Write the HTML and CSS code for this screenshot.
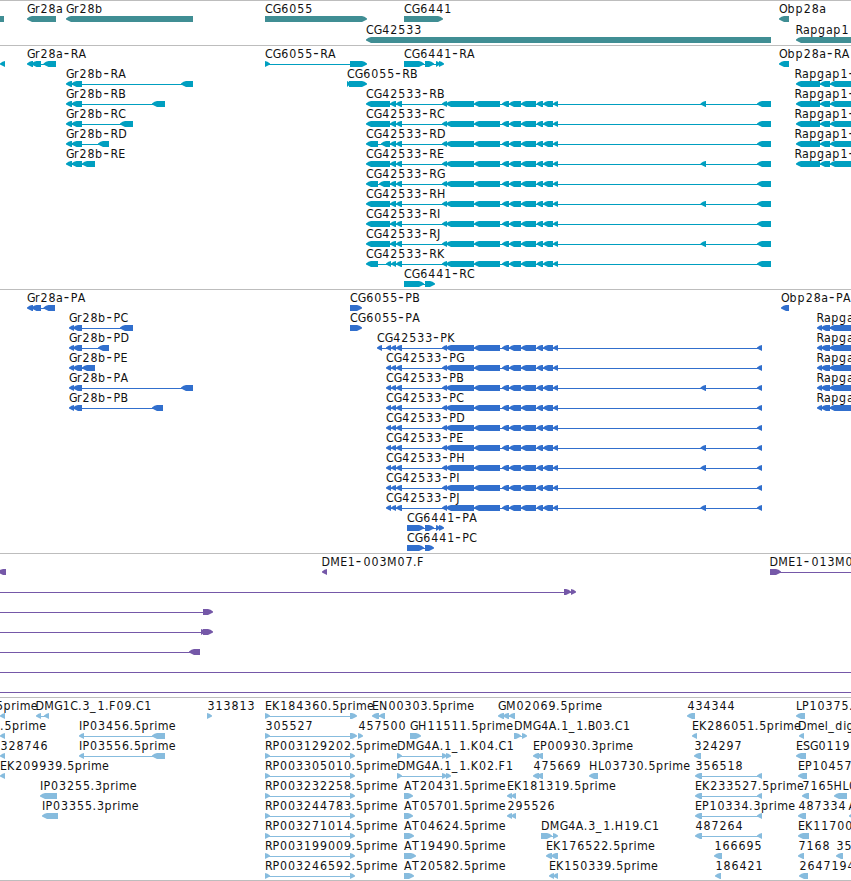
FILE: index.html
```html
<!DOCTYPE html>
<html lang="en">
<head>
<meta charset="utf-8">
<title>Genome tracks</title>
<link rel="stylesheet" href="styles.css">
</head>
<body>
<main class="browser">
  <svg class="track track-gene" id="gene"></svg>
  <svg class="track track-transcript" id="transcript"></svg>
  <svg class="track track-protein" id="protein"></svg>
  <svg class="track track-bac" id="bac"></svg>
  <svg class="track track-est" id="est"></svg>
</main>
<script src="tracks.js"></script>
</body>
</html>
```

FILE: styles.css
```css
body {
  margin: 0;
  background: #fff;
  overflow: hidden;
}

.browser {
  display: flex;
  flex-direction: column;
  width: 851px;
  height: 881px;
  box-sizing: border-box;
  border-bottom: 1px solid #bdbdbd;
}

.track {
  display: block;
  flex: none;
  box-sizing: border-box;
  width: 851px;
  border-top: 1px solid #bdbdbd;
  overflow: hidden;
}

.track text {
  fill: #111;
  font-family: "DejaVu Sans Condensed", "DejaVu Sans", sans-serif;
  font-stretch: condensed;
  font-size: 12.3px;
}

.track .dash {
  font-family: "DejaVu Sans", sans-serif;
  font-stretch: normal;
  font-size: 15px;
}

.track-gene { height: 45px; fill: #408e94; }
.track-transcript { height: 244px; fill: #009fc0; }
.track-protein { height: 264px; fill: #316fcd; }
.track-bac { height: 144px; fill: #7558a8; }
.track-est { height: 183px; fill: #87bcde; }
```

FILE: tracks.js
```js
const NS = 'http://www.w3.org/2000/svg';

// Cell width of each character in a label.
const ADVANCE = {
  C: 7.7, G: 8, R: 7.6, A: 8, B: 7, D: 8.8, E: 7, F: 7, H: 9, I: 3.5, J: 4, K: 7.8,
  L: 6, M: 10, N: 9, O: 8.5, P: 7, S: 7, T: 7.5,
  a: 7.2, b: 8, d: 8, e: 7, g: 8, i: 3.4, l: 3.4, m: 11, p: 7.8, r: 5,
  '-': 7.6, '.': 4, '_': 7
};

function add(svg, name, attrs) {
  const el = document.createElementNS(NS, name);
  for (const key in attrs) el.setAttribute(key, attrs[key]);
  svg.appendChild(el);
  return el;
}

function label(svg, x, base, str) {
  const xs = [];
  let cx = x;
  for (const ch of str) {
    xs.push((cx + (/[\d-]/.test(ch) ? 0.5 : 0)).toFixed(1));
    cx += ADVANCE[ch] || 8;
  }
  const text = add(svg, 'text', { x: xs.join(' '), y: base });
  const cut = str.indexOf('-');
  if (cut < 0) {
    text.textContent = str;
    return;
  }
  text.append(str.slice(0, cut));
  add(text, 'tspan', { class: 'dash' }).textContent = '-';
  text.append(str.slice(cut + 1));
}

function block(svg, s, e, top, dir) {
  const h = Math.min(5, e - s);
  const pts = dir === 'L'
    ? [[s, 2.4], [s + h * 0.5, 0.8], [s + h, 0], [e, 0], [e, 6], [s + h, 6], [s + h * 0.5, 4.8], [s, 3.6]]
    : [[e, 2.4], [e - h * 0.5, 0.8], [e - h, 0], [s, 0], [s, 6], [e - h, 6], [e - h * 0.5, 4.8], [e, 3.6]];
  add(svg, 'polygon', { points: pts.map(p => p[0] + ',' + (p[1] + top)).join(' ') });
}

// Feature: [row, name, label x, direction, [[start, end], ...]]
function draw(id, pitch, features) {
  const svg = document.getElementById(id);
  for (const [row, , , dir, blocks] of features) {
    const top = 15 + row * pitch;
    const s = blocks[0][0], e = blocks[blocks.length - 1][1];
    if (blocks.length > 1) add(svg, 'rect', { x: s + 1, y: top + 3, width: e - s - 2, height: 1 });
    for (const [a, b] of blocks) block(svg, a, b, top, dir);
  }
  for (const [row, name, x] of features) if (name) label(svg, x, 12 + row * pitch, name);
}

draw('gene', 21, [
  [0, '', 0, 'L', [[-10, 4]]],
  [0, 'Gr28a', 27, 'L', [[27, 56]]],
  [0, 'Gr28b', 66, 'L', [[66, 193]]],
  [0, 'CG6055', 265, 'R', [[265, 367]]],
  [0, 'CG6441', 404, 'R', [[404, 443]]],
  [0, 'Obp28a', 779, 'L', [[779, 789]]],
  [1, 'CG42533', 366, 'L', [[366, 771]]],
  [1, 'Rapgap1', 795.5, 'L', [[796, 870]]]
]);

const CORE = [[442, 447], [446, 474], [474, 500], [502, 509], [509, 521], [521, 536],
  [536.5, 543], [543, 553], [553, 558]];

const transcripts = [
  [0, '', 0, 'L', [[0, 5]]],
  [0, 'Gr28a-RA', 27, 'L', [[27, 33], [31.5, 41], [43.5, 56]]],
  [0, 'CG6055-RA', 265, 'R', [[265, 270], [350, 367]]],
  [0, 'CG6441-RA', 404, 'R', [[404, 424], [425, 434], [436, 440], [439, 444]]],
  [0, 'Obp28a-RA', 779, 'L', [[779, 789]]],
  [1, 'CG6055-RB', 347, 'R', [[347, 350], [349, 367]]],
  [11, 'CG6441-RC', 404, 'R', [[404, 424], [425, 435]]]
];
[['A', 181, 193], ['B', 152, 165], ['C', 120, 133], ['D', 98, 109], ['E', 82, 95]].forEach(([c, s, e], i) => {
  transcripts.push([i + 1, 'Gr28b-R' + c, 66, 'L', [[66, 72], [71.5, 82], [s, e]]]);
  transcripts.push([i + 1, 'Rapgap1-', 794.5, 'L', [[796, 820], [820, 830], [830, 870]]]);
});
[...'BCDEGHIJK'].forEach((c, i) => {
  let head = [[366, 390], [390, 396], [396, 402]];
  if ('DG'.includes(c)) head = [[366, 378], [c === 'D' ? 381 : 379, 390], [390, 396], [396, 402]];
  if (c === 'K') head = [[366, 378], [386, 391], [391, 396], [396, 402]];
  const mid = 'BEHJ'.includes(c) ? [[700.5, 706]] : [];
  transcripts.push([i + 2, 'CG42533-R' + c, 366, 'L', [...head, ...CORE, ...mid, [757, 771]]]);
});
draw('transcript', 20, transcripts);

const proteins = [
  [0, 'Gr28a-PA', 27, 'L', [[27, 33], [31.5, 41], [43.5, 55]]],
  [0, 'CG6055-PB', 350, 'R', [[350, 362]]],
  [1, 'CG6055-PA', 350, 'R', [[350, 362]]],
  [0, 'Obp28a-PA', 781, 'L', [[781, 789]]],
  [11, 'CG6441-PA', 407, 'R', [[407, 424], [425, 434], [436, 440], [439, 444]]],
  [12, 'CG6441-PC', 407, 'R', [[407, 424], [425, 434]]]
];
[['C', 120, 133], ['D', 98, 109], ['E', 82, 95], ['A', 181, 193], ['B', 152, 163]].forEach(([c, s, e], i) => {
  proteins.push([i + 1, 'Gr28b-P' + c, 69, 'L', [[69, 74], [73, 82], [s, e]]]);
  proteins.push([i + 1, 'Rapga', 816.5, 'L', [[817, 822], [821, 830], [829.5, 870]]]);
});
[...'KGBCDEHIJ'].forEach((c, i) => {
  const head = [[386, 391], [391, 396], [396, 402]];
  if (c === 'K') head.unshift([377, 382]);
  const mid = 'BEHJ'.includes(c) ? [[700.5, 706]] : [];
  proteins.push([i + 2, 'CG42533-P' + c, c === 'K' ? 377 : 386, 'L', [...head, ...CORE, ...mid, [757, 762]]]);
});
draw('protein', 20, proteins);

draw('bac', 20, [
  [0, '', 0, 'L', [[-2, 6]]],
  [0, 'DME1-003M07.F', 321.5, 'L', [[322, 327]]],
  [0, 'DME1-013M0', 769.5, 'R', [[770, 781], [880, 890]]],
  [1, '', 0, 'R', [[-20, -10], [564, 571], [571, 576]]],
  [2, '', 0, 'R', [[-20, -10], [203, 213]]],
  [3, '', 0, 'R', [[-20, -10], [201, 205], [203, 213]]],
  [4, '', 0, 'L', [[-20, -10], [189, 200]]],
  [5, '', 0, 'R', [[-20, -10], [880, 890]]],
  [6, '', 0, 'R', [[-20, -10], [880, 890]]]
]);

const ests = [
  [0, '5prime', -4.5, 'L', [[0, 5]]],
  [0, 'DMG1C.3_1.F09.C1', 35.5, 'L', [[36, 41], [44, 49]]],
  [0, '313813', 207, 'R', [[207, 212]]],
  [0, 'EK184360.5prime', 265, 'R', [[265, 270], [350, 357]]],
  [0, 'EN00303.5prime', 372, 'L', [[372, 379], [379, 385]]],
  [0, 'GM02069.5prime', 498, 'L', [[498, 504], [503, 509], [509, 515]]],
  [0, '434344', 687, 'L', [[687, 695]]],
  [0, 'LP10375.', 796, 'L', [[796, 805]]],
  [1, '.5prime', 0, 'L', [[0, 5]]],
  [1, 'IP03456.5prime', 79, 'L', [[79, 84], [152, 165]]],
  [1, '305527', 265, 'R', [[265, 270], [350, 357]]],
  [1, '457500', 358, 'R', [[358, 363]]],
  [1, 'GH11511.5prime', 410, 'R', [[410, 421]]],
  [1, 'DMG4A.1_1.B03.C1', 514, 'R', [[514, 521], [522, 527]]],
  [1, 'EK286051.5prime', 692, 'L', [[692, 697]]],
  [1, 'Dmel_dig', 798, 'L', [[799, 804]]],
  [2, '328746', 0, 'L', [[0, 5]]],
  [2, 'IP03556.5prime', 79, 'L', [[79, 84], [152, 165]]],
  [2, 'DMG4A.1_1.K04.C1', 397, 'R', [[397, 402], [442, 447], [446, 451]]],
  [2, 'EP00930.3prime', 533, 'L', [[533, 539], [537, 543]]],
  [2, '324297', 694, 'L', [[694, 701]]],
  [2, 'ESG0119', 796, 'L', [[796, 806]]],
  [3, 'EK209939.5prime', 0, 'L', [[0, 5]]],
  [3, 'DMG4A.1_1.K02.F1', 397, 'R', [[397, 402], [442, 447], [446, 451]]],
  [3, '475669', 533, 'L', [[533, 539], [537, 543]]],
  [3, 'HL03730.5prime', 589, 'L', [[589, 598]]],
  [3, '356518', 695, 'L', [[695, 702], [757, 762]]],
  [3, 'EP10457', 798, 'L', [[798, 807]]],
  [4, 'IP03255.3prime', 40, 'L', [[40, 57]]],
  [4, 'EK181319.5prime', 507, 'L', [[507, 512], [511, 516]]],
  [4, 'EK233527.5prime', 695, 'L', [[695, 702], [757, 762]]],
  [4, '7165', 802, 'L', [[802, 809]]],
  [4, 'HL0', 833.5, 'L', [[834, 847]]],
  [5, 'IP03355.3prime', 42, 'L', [[42, 58]]],
  [5, '295526', 507, 'L', [[507, 512], [511, 516]]],
  [5, 'EP10334.3prime', 695, 'L', [[695, 702], [757, 762]]],
  [5, '487334', 798, 'L', [[798, 806]]],
  [5, 'A', 848.5, 'L', [[849, 860]]],
  [6, 'DMG4A.3_1.H19.C1', 541, 'R', [[541, 552], [553, 558]]],
  [6, '487264', 695, 'L', [[695, 702], [757, 762]]],
  [6, 'EK11700', 798, 'L', [[798, 809]]],
  [7, 'EK176522.5prime', 546, 'L', [[546, 552], [551, 558]]],
  [7, '166695', 714, 'L', [[714, 722]]],
  [7, '7168', 798, 'L', [[798, 804]]],
  [7, '35', 836, 'L', [[836, 843]]],
  [8, 'EK150339.5prime', 549, 'L', [[549, 554], [553, 558]]],
  [8, '186421', 715, 'L', [[715, 721]]],
  [8, '2647194', 799, 'L', [[799, 808]]]
];
['129202', '305010', '232258', '244783', '271014', '199009', '246592'].forEach((n, i) => {
  ests.push([i + 2, 'RP003' + n + '.5prime', 265, 'R', [[265, 270], [350, 355]]]);
});
[['20431', 413], ['05701', 413], ['04624', 414], ['19490', 416], ['20582', 414]].forEach(([n, e], i) => {
  ests.push([i + 4, 'AT' + n + '.5prime', 404, 'R', [[404, e]]]);
});
draw('est', 20, ests);
```
